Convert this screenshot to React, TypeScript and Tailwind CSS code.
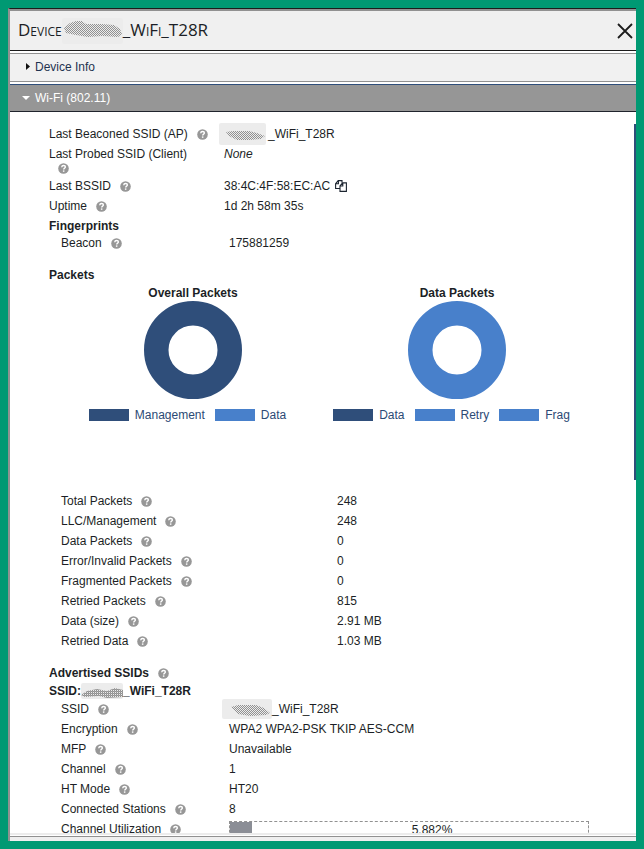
import React from "react";

function HelpIcon() {
  return (
    <svg className="ml-[9px] inline-block h-[11px] w-[11px] shrink-0" viewBox="0 0 11 11" aria-hidden="true">
      <circle cx="5.5" cy="5.5" r="5.3" fill="#979797" />
      <path d="M3.7 4.2c.1-1.1.9-1.7 1.9-1.7s1.8.6 1.8 1.5c0 1.1-1.7 1.2-1.7 2.4" fill="none" stroke="#fff" strokeWidth="1.4" />
      <rect x="4.9" y="7.4" width="1.5" height="1.4" fill="#fff" />
    </svg>
  );
}

function CopyIcon() {
  return (
    <svg className="ml-[5px] h-3 w-3 shrink-0" viewBox="0 0 12 12" fill="none" stroke="#1c2430" strokeWidth="1.1" aria-hidden="true">
      <path d="M5 8.5H.6V3.6L3.2.6H7v2.2M3.4.8v3H.8" />
      <path d="M5 5.8 7.6 2.9h3.8v8.5H5zM7.8 3v3H5.2" />
    </svg>
  );
}

type SmudgeProps = {
  id: string;
  width: number;
  height: number;
  path: string;
  className?: string;
  background?: string;
  dense?: boolean;
};

function Smudge({ id, width, height, path, className = "", background = "#ececec", dense = false }: SmudgeProps) {
  return (
    <svg className={`shrink-0 ${className}`} width={width} height={height} viewBox={`0 0 ${width} ${height}`} aria-hidden="true">
      <defs>
        <pattern id={id} width="2" height="2" patternUnits="userSpaceOnUse">
          <rect width="1" height="1" fill="#919191" />
          <rect x="1" y="1" width="1" height="1" fill="#919191" />
          {dense && <rect x="1" width="1" height="1" fill="#a0a0a0" />}
        </pattern>
      </defs>
      <rect width={width} height={height} rx="2" fill={background} />
      <path d={path} fill={`url(#${id})`} />
    </svg>
  );
}

function Row({ label, children, indent = false, wide = false }: { label: string; children: React.ReactNode; indent?: boolean; wide?: boolean }) {
  return (
    <div className={`flex h-5 items-center ${indent ? "pl-3" : ""}`}>
      <dt className={`flex shrink-0 items-center whitespace-nowrap ${wide ? "w-[276px]" : indent ? "w-[168px]" : "w-[175px]"}`}>
        {label}
        <HelpIcon />
      </dt>
      <dd className="flex min-w-0 flex-1 items-center whitespace-nowrap">{children}</dd>
    </div>
  );
}

function Donut({ title, color, legend, className }: { title: string; color: string; legend: { name: string; color: string }[]; className: string }) {
  return (
    <figure className={`flex flex-col items-center ${className}`}>
      <figcaption className="h-4 font-bold leading-4">{title}</figcaption>
      <svg className="h-[98px] w-[98px]" viewBox="0 0 98 98" aria-hidden="true">
        <circle cx="49" cy="49" r="36.75" fill="none" stroke={color} strokeWidth="24.5" />
      </svg>
      <ul className="mr-[11px] mt-2 flex h-4 items-center gap-2.5 text-[#2c4a75]">
        {legend.map((l) => (
          <li key={l.name} className="flex items-center gap-1.5 leading-4">
            <span className="h-3 w-10" style={{ backgroundColor: l.color }} />
            {l.name}
          </li>
        ))}
      </ul>
    </figure>
  );
}

const packets: [string, string][] = [
  ["Total Packets", "248"],
  ["LLC/Management", "248"],
  ["Data Packets", "0"],
  ["Error/Invalid Packets", "0"],
  ["Fragmented Packets", "0"],
  ["Retried Packets", "815"],
  ["Data (size)", "2.91 MB"],
  ["Retried Data", "1.03 MB"],
];

const NAVY = "#2f4e7a";
const BLUE = "#4880cb";

export default function App() {
  return (
    <div className="h-screen bg-[#009973] p-2 font-['Liberation_Sans',Arial,sans-serif] text-xs text-[#1c1f26]">
      <main className="flex h-full flex-col overflow-hidden border-l-2 border-t border-l-[#919191] border-t-[#1c1c1c] bg-white">
        <header className="flex h-[42px] shrink-0 items-center justify-between border-b border-t-2 border-b-[#1c1c1c] border-t-[#919191] bg-[#f0f0f0] pl-2">
          <h1 className="flex items-center font-['Open_Sans',sans-serif] text-[17px] [font-variant:small-caps]">
            Device
            <Smudge
              id="smudge-title"
              width={61}
              height={26}
              background="#ececec"
              path="M2 10 8 5 14 3 20 3 24 6 40 6 52 7 58 11 60 16 56 19 40 18 26 19 14 17 4 15Z"
            />
            _WiFi_T28R
          </h1>
          <button type="button" aria-label="Close" className="mr-[3px]">
            <svg className="h-4 w-4" viewBox="0 0 16 16" stroke="#1c1c1c" strokeWidth="1.8" aria-hidden="true">
              <path d="M1 1 15 15M15 1 1 15" />
            </svg>
          </button>
        </header>
        <button type="button" className="mt-0.5 flex h-[29px] shrink-0 items-center border-y border-[#919191] bg-[#f1f1f1] pb-0.5 pl-4 text-left text-[#1f3350]">
          <svg className="mr-[5px] h-[7px] w-1" viewBox="0 0 4 7" fill="#111" aria-hidden="true"><path d="M0 0 4 3.5 0 7z" /></svg>
          Device Info
        </button>
        <button type="button" className="mt-0.5 flex h-7 shrink-0 items-center border-y border-b-[#20242c] border-t-[#2f4e7a] bg-[#969696] pl-3 text-left text-white">
          <svg className="mr-[5px] h-1 w-2" viewBox="0 0 8 4" fill="#fff" aria-hidden="true"><path d="M0 0h8L4 4z" /></svg>
          Wi-Fi (802.11)
        </button>
        <div className="flex min-h-0 flex-1">
          <section className="min-w-0 flex-1 overflow-hidden pl-[39px] pt-3">
            <dl>
              <Row label="Last Beaconed SSID (AP)">
                <Smudge id="smudge-beaconed" width={47} height={22} className="-ml-[5px]" path="M7 9 14 8 30 8 38 10 46 13 42 16 30 17 18 17 10 13Z" />
                <span className="pl-0.5">_WiFi_T28R</span>
              </Row>
              <div className="flex h-8">
                <dt className="w-[175px] shrink-0">
                  <div className="h-5 leading-5">Last Probed SSID (Client)</div>
                  <div className="flex h-2 items-center"><HelpIcon /></div>
                </dt>
                <dd className="italic leading-5">None</dd>
              </div>
              <Row label="Last BSSID">38:4C:4F:58:EC:AC<CopyIcon /></Row>
              <Row label="Uptime">1d 2h 58m 35s</Row>
            </dl>
            <h2 className="h-[17px] font-bold leading-5">Fingerprints</h2>
            <dl><Row label="Beacon" indent>175881259</Row></dl>
            <h2 className="mt-3 h-5 font-bold leading-5">Packets</h2>
            <div className="flex">
              <Donut className="w-[288px]" title="Overall Packets" color={NAVY} legend={[{ name: "Management", color: NAVY }, { name: "Data", color: BLUE }]} />
              <Donut className="w-60" title="Data Packets" color={BLUE} legend={[{ name: "Data", color: NAVY }, { name: "Retry", color: BLUE }, { name: "Frag", color: BLUE }]} />
            </div>
            <dl className="mt-[68px]">
              {packets.map(([k, v]) => <Row key={k} label={k} indent wide>{v}</Row>)}
            </dl>
            <h2 className="mt-3 flex h-5 items-center font-bold">Advertised SSIDs<HelpIcon /></h2>
            <h3 className="flex h-4 items-center font-bold">
              SSID:
              <Smudge id="smudge-heading" width={42} height={16} dense path="M0 12 6 8 16 6 26 8 34 5 42 7 42 14 26 15 18 13 4 14Z" />
              <span>_WiFi_T28R</span>
            </h3>
            <dl>
              <Row label="SSID" indent>
                <Smudge id="smudge-ssid" width={50} height={20} className="-ml-[7px]" path="M9 8 16 6 34 6 42 9 48 14 44 16 28 17 16 15Z" />
                <span>_WiFi_T28R</span>
              </Row>
              <Row label="Encryption" indent>WPA2 WPA2-PSK TKIP AES-CCM</Row>
              <Row label="MFP" indent>Unavailable</Row>
              <Row label="Channel" indent>1</Row>
              <Row label="HT Mode" indent>HT20</Row>
              <Row label="Connected Stations" indent>8</Row>
              <Row label="Channel Utilization" indent>
                <div className="mr-[45px] flex h-4 flex-1 border border-dashed border-[#919191] leading-4">
                  <span className="w-[22px] bg-[#8b8e96]" />
                  <span className="flex-1 pl-6 text-center">5.882%</span>
                </div>
              </Row>
            </dl>
          </section>
          <div className="mt-3 h-[356px] w-0.5 bg-[#2f4e7a]" />
        </div>
        <footer className="h-2 shrink-0 border-t-2 border-[#ececec] bg-white">
          <div className="mt-px h-[5px] border-t border-[#919191] bg-[#efefef]" />
        </footer>
      </main>
    </div>
  );
}
